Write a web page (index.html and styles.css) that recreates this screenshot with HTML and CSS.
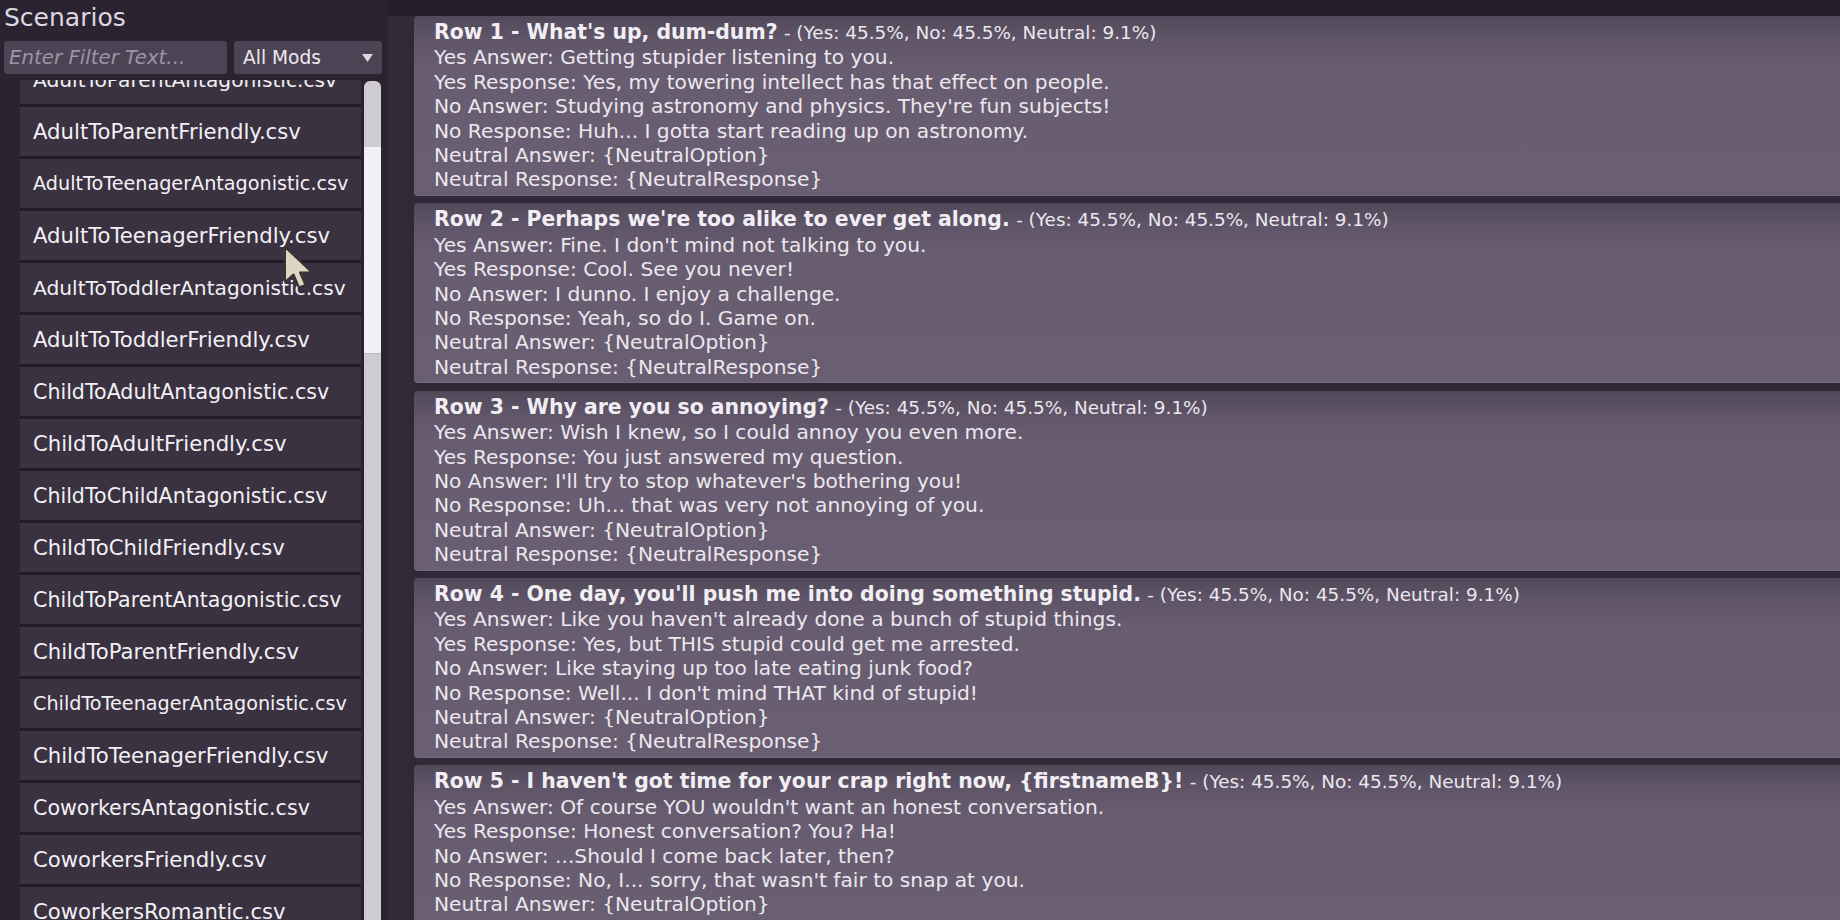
FILE: index.html
```html
<!DOCTYPE html>
<html>
<head>
<meta charset="utf-8">
<title>Scenarios</title>
<link rel="stylesheet" href="styles.css">
</head>
<body>
<div class="app">
  <aside class="sidebar">
    <div class="title">Scenarios</div>
    <div class="filters">
      <div class="filter-input">Enter Filter Text...</div>
      <div class="mods"><span>All Mods</span>
        <svg class="caret" width="11" height="8" viewBox="0 0 11 8"><path d="M0 0 H11 L5.5 8 Z" fill="#dcd8e0"/></svg>
      </div>
    </div>
    <div class="list-wrap">
      <div class="list">
        <div class="list-inner">
          <div class="item fit-m">AdultToParentAntagonistic.csv</div>
          <div class="item">AdultToParentFriendly.csv</div>
          <div class="item fit-s">AdultToTeenagerAntagonistic.csv</div>
          <div class="item">AdultToTeenagerFriendly.csv</div>
          <div class="item fit-m">AdultToToddlerAntagonistic.csv</div>
          <div class="item">AdultToToddlerFriendly.csv</div>
          <div class="item fit-l">ChildToAdultAntagonistic.csv</div>
          <div class="item">ChildToAdultFriendly.csv</div>
          <div class="item fit-l">ChildToChildAntagonistic.csv</div>
          <div class="item">ChildToChildFriendly.csv</div>
          <div class="item fit-l">ChildToParentAntagonistic.csv</div>
          <div class="item">ChildToParentFriendly.csv</div>
          <div class="item fit-s">ChildToTeenagerAntagonistic.csv</div>
          <div class="item">ChildToTeenagerFriendly.csv</div>
          <div class="item fit-l">CoworkersAntagonistic.csv</div>
          <div class="item">CoworkersFriendly.csv</div>
          <div class="item">CoworkersRomantic.csv</div>
        </div>
      </div>
      <div class="scrollbar"><div class="thumb"></div></div>
    </div>
  </aside>
  <main class="main">
    <div class="card">
      <div><b>Row 1 - What's up, dum-dum?</b> <span class="stats">- (Yes: 45.5%, No: 45.5%, Neutral: 9.1%)</span></div>
      <div>Yes Answer: Getting stupider listening to you.</div>
      <div>Yes Response: Yes, my towering intellect has that effect on people.</div>
      <div>No Answer: Studying astronomy and physics. They're fun subjects!</div>
      <div>No Response: Huh... I gotta start reading up on astronomy.</div>
      <div>Neutral Answer: {NeutralOption}</div>
      <div>Neutral Response: {NeutralResponse}</div>
    </div>
    <div class="card">
      <div><b>Row 2 - Perhaps we're too alike to ever get along.</b> <span class="stats">- (Yes: 45.5%, No: 45.5%, Neutral: 9.1%)</span></div>
      <div>Yes Answer: Fine. I don't mind not talking to you.</div>
      <div>Yes Response: Cool. See you never!</div>
      <div>No Answer: I dunno. I enjoy a challenge.</div>
      <div>No Response: Yeah, so do I. Game on.</div>
      <div>Neutral Answer: {NeutralOption}</div>
      <div>Neutral Response: {NeutralResponse}</div>
    </div>
    <div class="card">
      <div><b>Row 3 - Why are you so annoying?</b> <span class="stats">- (Yes: 45.5%, No: 45.5%, Neutral: 9.1%)</span></div>
      <div>Yes Answer: Wish I knew, so I could annoy you even more.</div>
      <div>Yes Response: You just answered my question.</div>
      <div>No Answer: I'll try to stop whatever's bothering you!</div>
      <div>No Response: Uh... that was very not annoying of you.</div>
      <div>Neutral Answer: {NeutralOption}</div>
      <div>Neutral Response: {NeutralResponse}</div>
    </div>
    <div class="card">
      <div><b>Row 4 - One day, you'll push me into doing something stupid.</b> <span class="stats">- (Yes: 45.5%, No: 45.5%, Neutral: 9.1%)</span></div>
      <div>Yes Answer: Like you haven't already done a bunch of stupid things.</div>
      <div>Yes Response: Yes, but THIS stupid could get me arrested.</div>
      <div>No Answer: Like staying up too late eating junk food?</div>
      <div>No Response: Well... I don't mind THAT kind of stupid!</div>
      <div>Neutral Answer: {NeutralOption}</div>
      <div>Neutral Response: {NeutralResponse}</div>
    </div>
    <div class="card">
      <div><b>Row 5 - I haven't got time for your crap right now, {firstnameB}!</b> <span class="stats">- (Yes: 45.5%, No: 45.5%, Neutral: 9.1%)</span></div>
      <div>Yes Answer: Of course YOU wouldn't want an honest conversation.</div>
      <div>Yes Response: Honest conversation? You? Ha!</div>
      <div>No Answer: ...Should I come back later, then?</div>
      <div>No Response: No, I... sorry, that wasn't fair to snap at you.</div>
      <div>Neutral Answer: {NeutralOption}</div>
      <div>Neutral Response: {NeutralResponse}</div>
    </div>
  </main>
</div>
<svg class="cursor" width="36" height="46" viewBox="0 0 36 46">
  <path d="M2 2 L2 37 L10.5 29.5 L16 42.5 L22.5 40 L17 27.5 L29 27.5 Z" fill="#ddd6c0" stroke="#3a3530" stroke-width="2" stroke-linejoin="round"/>
</svg>
</body>
</html>
```
FILE: styles.css
```css
html, body {
  margin: 0;
  padding: 0;
}
body {
  width: 1840px;
  height: 920px;
  overflow: hidden;
  background: #2a2330;
  font-family: "DejaVu Sans", sans-serif;
  position: relative;
}
.app {
  display: flex;
  height: 920px;
}
.sidebar {
  width: 388px;
  flex: none;
  display: flex;
  flex-direction: column;
  background: #2a2330;
}
.title {
  box-sizing: border-box;
  height: 41px;
  padding: 3px 0 0 4px;
  font-size: 25px;
  line-height: 30px;
  color: #dcd8e0;
}
.filters {
  display: flex;
  gap: 7px;
  padding-left: 4px;
  height: 33px;
}
.filter-input {
  width: 223px;
  box-sizing: border-box;
  padding-left: 5px;
  display: flex;
  align-items: center;
  background: #4c4454;
  border-radius: 3px;
  font-style: italic;
  font-size: 19.8px;
  color: #9d95a5;
}
.mods {
  width: 148px;
  box-sizing: border-box;
  padding: 0 9px 0 9px;
  display: flex;
  align-items: center;
  justify-content: space-between;
  background: #4c4454;
  border-radius: 3px;
  font-size: 18.6px;
  color: #ece9ef;
}
.caret {
  display: block;
}
.list-wrap {
  margin-top: 6px;
  padding-left: 20px;
  display: flex;
  gap: 3px;
  flex: 1;
  overflow: hidden;
}
.list {
  width: 341px;
  flex: none;
  overflow: hidden;
}
.list-inner {
  margin-top: -25px;
}
.item {
  box-sizing: border-box;
  height: 52px;
  padding-left: 13px;
  display: flex;
  align-items: center;
  background: #3a3241;
  border-bottom: 3px solid #211b26;
  font-size: 21.2px;
  color: #f2f0f4;
  white-space: nowrap;
}
.item.fit-l {
  font-size: 20.6px;
}
.item.fit-m {
  font-size: 20.2px;
}
.item.fit-s {
  font-size: 19.2px;
}
.scrollbar {
  width: 17px;
  flex: none;
  margin-top: 1px;
  box-sizing: border-box;
  padding-top: 66px;
  background: #cfcbd3;
  border-radius: 6px 6px 0 0;
}
.thumb {
  height: 206px;
  background: #f2f0f4;
  border-bottom: 1px solid #bdb8c2;
}
.main {
  flex: 1;
  min-width: 0;
  box-sizing: border-box;
  padding: 16px 0 0 26px;
  overflow: hidden;
  background: linear-gradient(to bottom, #241f2a 0, #241f2a 16px, #302937 16px);
}
.card {
  box-sizing: border-box;
  padding: 4px 0 3px 20px;
  margin-bottom: 7.5px;
  border-radius: 4px 0 0 4px;
  background: linear-gradient(to bottom, #514959 0, #5f5468 22px, #685c70 50px, #6a5e72 100%);
  border-bottom: 1px solid #74687b;
  font-size: 20.2px;
  line-height: 24.4px;
  color: #ebe8ee;
  white-space: nowrap;
}
.card b {
  font-weight: 700;
  font-size: 20.4px;
  color: #f1eff3;
}
.stats {
  font-size: 18.4px;
}
.cursor {
  position: absolute;
  left: 283px;
  top: 245px;
}
```
